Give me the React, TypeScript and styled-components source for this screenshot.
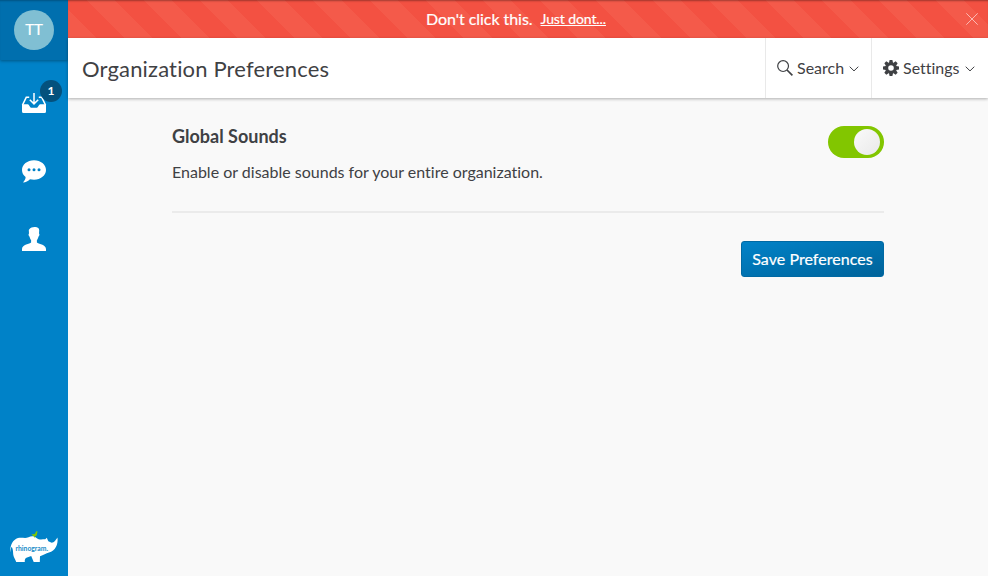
import React from "react";
import styled, { createGlobalStyle } from "styled-components";

const GlobalStyle = createGlobalStyle`
  * { box-sizing: border-box; }
  body {
    margin: 0;
    background: #f9f9f9;
    color: #3f4144;
    font-family: Lato, sans-serif;
    font-size: 16px;
    font-variant-ligatures: none;
  }
  h1, h2, p { margin: 0; }
  button { font: inherit; font-variant-ligatures: none; color: inherit; border: 0; background: none; padding: 0; }
  svg { display: block; flex: none; }
`;

const Shell = styled.div`
  display: flex;
  height: 576px;
  overflow: hidden;
`;

const Sidebar = styled.nav`
  display: flex;
  flex-direction: column;
  width: 68px;
  flex: none;
  background: #0082c8;
`;

const Profile = styled.div`
  display: flex;
  align-items: center;
  justify-content: center;
  height: 60px;
  background: #006fae;
  box-shadow: inset 0 2px 2px -1px rgba(0, 0, 0, 0.25), 0 1px 3px rgba(0, 0, 0, 0.35);
`;

const Avatar = styled.div`
  width: 40px;
  height: 40px;
  border-radius: 50%;
  background: #80bfd3;
  color: #fff;
  font-size: 15px;
  line-height: 39px;
  text-align: center;
  -webkit-text-stroke: 0.2px #fff;
`;

const NavItem = styled.a`
  position: relative;
  display: flex;
  align-items: center;
  justify-content: center;
  height: 68px;
  color: #fff;
`;

const NavList = styled.div`
  padding-top: 9px;
`;

const Badge = styled.span`
  position: absolute;
  top: 11px;
  left: 40px;
  width: 22px;
  height: 22px;
  border-radius: 50%;
  background: #04517d;
  font-size: 12px;
  font-weight: 700;
  line-height: 22px;
  text-align: center;
`;

const Brand = styled.div`
  margin-top: auto;
  height: 48px;
`;

const Main = styled.div`
  display: flex;
  flex-direction: column;
  flex: 1;
`;

const Banner = styled.div`
  display: grid;
  grid-template-columns: 8px 1fr 32px;
  align-items: center;
  height: 38px;
  color: #fff;
  background: repeating-linear-gradient(45deg, #f45a4a 0 20px, #f35142 20px 40px);
  box-shadow: inset 0 2px 2px -1px rgba(0, 0, 0, 0.35);
`;

const BannerText = styled.div`
  grid-column: 2;
  display: flex;
  justify-content: center;
  gap: 8px;
  line-height: 38px;
  letter-spacing: -0.05px;
  -webkit-text-stroke: 0.2px #fff;
`;

const BannerLink = styled.a`
  font-size: 14px;
  text-decoration: underline;
  letter-spacing: -0.1px;
`;

const Close = styled.button`
  display: flex;
  justify-content: center;
`;

const Header = styled.header`
  display: flex;
  align-items: center;
  height: 60px;
  padding-left: 14px;
  background: #fff;
  box-shadow: 0 1px 3px rgba(0, 0, 0, 0.3);
`;

const Title = styled.h1`
  flex: 1;
  font-size: 22px;
  font-weight: 400;
  line-height: 60px;
  padding-top: 2px;
  letter-spacing: 0.16px;
`;

const HeaderButton = styled.button<{ $width: number }>`
  display: flex;
  align-items: center;
  width: ${(p) => p.$width}px;
  height: 60px;
  padding-left: 11px;
  border-left: 1px solid #e9e9e9;
`;

const HeaderLabel = styled.span`
  margin: 0 5px 2px 4px;
`;

const Content = styled.main`
  width: 712px;
  margin: 28px 0 0 104px;
`;

const Setting = styled.section`
  display: flex;
  justify-content: space-between;
  height: 87px;
  border-bottom: 2px solid #ebebeb;
  margin-bottom: 28px;
`;

const SettingTitle = styled.h2`
  font-size: 18px;
  font-weight: 700;
  line-height: 20px;
`;

const SettingText = styled.p`
  margin-top: 14px;
  line-height: 24px;
`;

const Toggle = styled.button`
  display: flex;
  justify-content: flex-end;
  width: 56px;
  height: 32px;
  padding: 3px 4px;
  border-radius: 16px;
  background: #82c600;
`;

const Knob = styled.span`
  width: 26px;
  height: 26px;
  border-radius: 50%;
  background: linear-gradient(135deg, #fafafa, #e9e9e9);
`;

const Actions = styled.div`
  display: flex;
  justify-content: flex-end;
`;

const SaveButton = styled.button`
  width: 143px;
  height: 36px;
  padding-bottom: 2px;
  border: 1px solid #0069a3;
  border-radius: 3px;
  color: #fff;
  background: linear-gradient(to bottom right, #0082c8, #00639a);
  letter-spacing: 0.05px;
  -webkit-text-stroke: 0.2px #fff;
`;

const InboxIcon = () => (
  <svg width="26" height="22" viewBox="0 0 26 22" fill="none">
    <path d="M1.500 13 5.300 5.200h2.900M17.800 5.200h2.900L24.500 13" stroke="#fff" strokeWidth="1.600" />
    <path d="M1 12.200h5.700c1.600 0 2.100 3.600 3.800 3.600h5c1.700 0 2.200-3.600 3.800-3.600H25v7.300q0 1.500-1.500 1.500h-21Q1 21 1 19.500Z" fill="#fff" />
    <path d="M13 1v10M8.800 7.700 13 11.900l4.200-4.200" stroke="#fff" strokeWidth="1.500" />
  </svg>
);

const ChatIcon = () => (
  <svg width="24" height="23" viewBox="0 0 24 23">
    <path d="M12 .3C5.300.3 0 4.700 0 10c0 2.800 1.300 5.300 3.600 7.100C3.600 19 2.700 20.800 1 22.500c2.800-.2 5.200-1.300 7-3.200 1.300.3 2.600.4 4 .4 6.700 0 12-4.300 12-9.700S18.700.3 12 .3Z" fill="#fff" />
    <g fill="#0082c8"><circle cx="7" cy="9.800" r="1.500" /><circle cx="12" cy="9.800" r="1.500" /><circle cx="17" cy="9.800" r="1.500" /></g>
  </svg>
);

const PersonIcon = () => (
  <svg width="24" height="24" viewBox="0 0 24 24">
    <path d="M7.100 2.500C8.500.7 10.500.1 12.500 0c2.900-.1 4.700 1 4.700 3.200l-.2 3.200c.8.400.4 2.600-.5 3.100-.3 1.600-.9 2.700-1.600 3.600v2.400c2.900 2 8.900 2.100 9.100 6.600V24H0v-1.900c.2-4.500 6.200-4.600 9.100-6.600v-2.400C8.400 12.200 7.800 11.100 7.500 9.500c-.9-.5-1.300-2.700-.5-3.100L6.800 3Z" fill="#fff" />
  </svg>
);

const RhinoLogo = () => (
  <svg width="68" height="48" viewBox="0 0 68 48">
    <path d="M10.200 24.500C10 17 12.800 11.600 18 10c4-1 7 .8 10.500-.8 3-1.500 5.800-1.300 8 .8 2.700 2.200 5.300 1.300 8.800 1.300l1.500-1.500 1.500 3.500 3.400 1.500c2.500 0 4-2.800 5.800-5.200.9 6.900-2.300 13.600-8.500 15-3 .6-5.500 3-9 3.600L39.800 34h-6.100l-2.500-6-4.800 1.800c-1.100.5-1.900 2.400-1.600 4.200h-8.600c-.8-2.600-3-4.600-3.100-8.900-.1-3.100-.4-4.600-1.500-6.300-.8 1.700-.9 3.200-1.400 5.700Z" fill="#fff" />
    <path d="M31.500 6c1.900.8 3.300.1 4-1.100 0-1 .6-1.700 1.800-1.600l.4 1-.6.400c.2 2-.7 3.500-2.200 3.700v1h-.8v-1C32.900 8.200 32 7.200 31.500 6Z" fill="#82c600" />
    <text x="15.500" y="22.800" textLength="32.500" lengthAdjust="spacingAndGlyphs" fontFamily="Lato, sans-serif" fontSize="8" fontWeight="700" fill="#168bc8">rhinogram.</text>
  </svg>
);

const SearchIcon = () => (
  <svg width="16" height="16" viewBox="0 0 16 16" fill="none" stroke="#3f4144">
    <circle cx="6.100" cy="6.100" r="5.400" strokeWidth="1.200" />
    <path d="m10 10 5.400 5.400" strokeWidth="1.700" />
  </svg>
);

const GearIcon = () => (
  <svg width="16" height="16" viewBox="-8 -8 16 16" fill="#3f4144">
    <path fillRule="evenodd" d="M-5.800 0a5.800 5.800 0 1 0 11.600 0a5.800 5.800 0 1 0-11.600 0ZM-2.800 0a2.800 2.800 0 1 1 5.600 0a2.800 2.800 0 1 1-5.600 0Z" />
    {[0, 45, 90, 135, 180, 225, 270, 315].map((angle) => (
      <path key={angle} d="M-2-5-1.400-8h2.800L2-5Z" transform={`rotate(${angle})`} />
    ))}
  </svg>
);

const ChevronIcon = styled.svg`
  margin-top: 2px;
`;

const Chevron = () => (
  <ChevronIcon width="10" height="6" viewBox="0 0 10 6" fill="none">
    <path d="m.7.7 4.300 4.200L9.300.7" stroke="#3f4144" strokeWidth="1" />
  </ChevronIcon>
);

export default function App() {
  return (
    <>
      <GlobalStyle />
      <Shell>
        <Sidebar>
          <Profile><Avatar>TT</Avatar></Profile>
          <NavList>
            <NavItem><InboxIcon /><Badge>1</Badge></NavItem>
            <NavItem><ChatIcon /></NavItem>
            <NavItem><PersonIcon /></NavItem>
          </NavList>
          <Brand><RhinoLogo /></Brand>
        </Sidebar>
        <Main>
          <Banner>
            <BannerText>
              <span>Don't click this.</span>
              <BannerLink>Just dont...</BannerLink>
            </BannerText>
            <Close aria-label="Close">
              <svg width="12" height="12" viewBox="0 0 12 12">
                <path d="m.3.3 11.400 11.400M11.700.3.3 11.700" stroke="#fbb9b2" strokeWidth="1" />
              </svg>
            </Close>
          </Banner>
          <Header>
            <Title>Organization Preferences</Title>
            <HeaderButton $width={106}><SearchIcon /><HeaderLabel>Search</HeaderLabel><Chevron /></HeaderButton>
            <HeaderButton $width={117}><GearIcon /><HeaderLabel>Settings</HeaderLabel><Chevron /></HeaderButton>
          </Header>
          <Content>
            <Setting>
              <div>
                <SettingTitle>Global Sounds</SettingTitle>
                <SettingText>Enable or disable sounds for your entire organization.</SettingText>
              </div>
              <Toggle role="switch" aria-checked="true" aria-label="Global Sounds"><Knob /></Toggle>
            </Setting>
            <Actions><SaveButton>Save Preferences</SaveButton></Actions>
          </Content>
        </Main>
      </Shell>
    </>
  );
}
